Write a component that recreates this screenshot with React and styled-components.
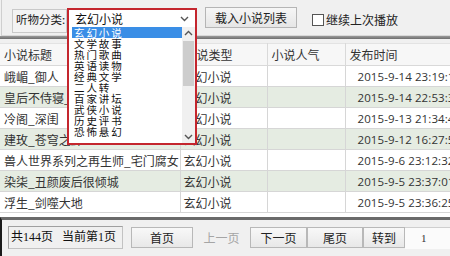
import React from "react";
import styled, { createGlobalStyle } from "styled-components";

const GlobalStyle = createGlobalStyle`
  html, body { margin: 0; padding: 0; background: #f0f0f0; }
  body { font-family: "Noto Sans CJK SC", "Microsoft YaHei", sans-serif; }
`;

const Window = styled.div`
  width: 450px;
  height: 256px;
  background: #f0f0f0;
  overflow: hidden;
  display: flex;
  flex-direction: column;
  position: relative;
  color: #222;
`;

const ToolGroup = styled.div`
  height: 36px;
  margin-left: 1px;
  border-left: 1px solid #cfcfcf;
  border-bottom: 1px solid #d8d8d8;
  display: flex;
  align-items: flex-start;
  padding: 7px 0 0 10px;
  box-sizing: border-box;
  position: relative;
  z-index: 2;
`;

const LabelBox = styled.div`
  width: 55px;
  height: 24px;
  margin-top: 2px;
  border: 1px solid #c9c9c9;
  background: #f3f3f3;
  box-sizing: border-box;
  font-size: 11.5px;
  line-height: 18px;
  padding-left: 3px;
  white-space: nowrap;
  overflow: hidden;
  color: #222;
`;

const Combo = styled.div`
  position: relative;
  width: 130px;
  height: 20px;
  margin-top: 1px;
`;

const Popup = styled.div`
  position: absolute;
  left: 0;
  top: 0;
  width: 130px;
  border: 2px solid #c4262e;
  box-sizing: border-box;
  background: #fff;
`;

const ComboField = styled.div`
  height: 17px;
  display: flex;
  align-items: center;
  justify-content: space-between;
  padding: 0 6px 0 6px;
  font-size: 12px;
  color: #111;
  background: #fff;
`;

const Chevron = styled.svg`
  width: 9px;
  height: 6px;
`;

const ListArea = styled.div`
  display: flex;
  height: 116px;
`;

const Items = styled.div`
  flex: 1;
  padding: 0 0 0 3px;
  display: flex;
  flex-direction: column;
`;

const Item = styled.div`
  height: 11px;
  line-height: 11px;
  font-size: 10.5px;
  letter-spacing: 1.9px;
  padding-left: 2px;
  color: ${(p) => (p.$active ? "#fff" : "#111")};
  background: ${(p) => (p.$active ? "#3a8ee6" : "transparent")};
  white-space: nowrap;
`;

const ScrollBar = styled.div`
  width: 13px;
  background: #f0f0f0;
  display: flex;
  flex-direction: column;
  align-items: center;
`;

const ScrollArrow = styled.div`
  height: 12px;
  display: flex;
  align-items: center;
  justify-content: center;
`;

const Thumb = styled.div`
  width: 11px;
  height: 45px;
  background: #cdcdcd;
  margin-top: 2px;
`;

const ScrollSpacer = styled.div`
  flex: 1;
`;

const LoadButton = styled.div`
  margin-left: 8px;
  width: 92px;
  height: 21px;
  border: 1px solid #b5b5b5;
  background: linear-gradient(#f6f6f6, #e6e6e6);
  box-sizing: border-box;
  font-size: 12px;
  line-height: 19px;
  text-align: center;
  color: #222;
`;

const CheckLabel = styled.label`
  margin-left: 15px;
  margin-top: 4px;
  display: flex;
  align-items: center;
  gap: 2px;
  font-size: 12px;
  color: #222;
`;

const CheckBox = styled.span`
  width: 12px;
  height: 12px;
  border: 1px solid #555;
  background: #fff;
  box-sizing: border-box;
`;

const DarkBand = styled.div`
  height: 3px;
  background: linear-gradient(#9a9a9a, #6e6e6e);
`;

const TableWrap = styled.div`
  margin-top: 4px;
  height: 174px;
  background: #fff;
  overflow: hidden;
`;

const Table = styled.table`
  border-collapse: collapse;
  table-layout: fixed;
  width: 500px;
  font-size: 12px;
`;

const HeadCell = styled.th`
  height: 21px;
  padding: 0 0 0 4px;
  text-align: left;
  font-weight: normal;
  color: #333;
  background: #f7f7f7;
  border-right: 1px solid #d9d9d9;
  border-bottom: 1px solid #d9d9d9;
  border-top: 1px solid #e3e3e3;
  white-space: nowrap;
  overflow: hidden;
`;

const Row = styled.tr`
  background: ${(p) => (p.$alt ? "#e5ece2" : "#fff")};
`;

const Cell = styled.td`
  height: 20px;
  padding: 0 0 0 ${(p) => p.$pad || 4}px;
  color: #333;
  border-right: 1px solid #d6d6d6;
  border-bottom: 1px solid #d6d6d6;
  white-space: nowrap;
  overflow: hidden;
`;

const DateCell = styled(Cell)`
  font-family: "Open Sans", "Noto Sans CJK SC", sans-serif;
  font-size: 11.5px;
  padding-left: 12px;
  letter-spacing: 0.1px;
`;

const BottomBar = styled.div`
  flex: 1;
  border-top: 3px solid #6a6a6a;
  border-left: 2px solid #1a1a1a;
  display: flex;
  align-items: flex-start;
  padding: 6px 0 0 6px;
  box-sizing: border-box;
`;

const PageInfo = styled.div`
  width: 115px;
  height: 23px;
  border: 1px solid #c2c2c2;
  border-top-color: #a0a0a0;
  border-left-color: #a0a0a0;
  box-sizing: border-box;
  background: #f0f0f0;
  font-family: "Liberation Serif", "Noto Sans CJK SC", serif;
  font-size: 12px;
  line-height: 21px;
  padding-left: 2px;
  white-space: nowrap;
  color: #111;
`;

const NavButton = styled.div`
  width: ${(p) => p.$w}px;
  height: 21px;
  margin-top: 1px;
  margin-left: ${(p) => p.$ml || 0}px;
  border: 1px solid ${(p) => (p.$disabled ? "transparent" : "#b8b8b8")};
  background: ${(p) => (p.$disabled ? "transparent" : "linear-gradient(#f8f8f8, #e8e8e8)")};
  box-sizing: border-box;
  font-size: 12px;
  line-height: 19px;
  text-align: center;
  color: ${(p) => (p.$disabled ? "#a5a5a5" : "#222")};
`;

const PageInput = styled.div`
  flex: 1;
  height: 21px;
  margin-top: 1px;
  background: #fbfbfb;
  border-top: 1px solid #cfcfcf;
  font-family: "Liberation Serif", serif;
  font-size: 11px;
  line-height: 20px;
  padding-left: 16px;
  color: #333;
`;

const categories = [
  "玄幻小说",
  "文学故事",
  "热门歌曲",
  "英语读物",
  "经典文学",
  "二人转",
  "百家讲坛",
  "武侠小说",
  "历史评书",
  "恐怖悬幻",
];

const rows = [
  ["峨嵋_御人", "玄幻小说", "2015-9-14 23:19:15"],
  ["皇后不侍寝_陛下", "玄幻小说", "2015-9-14 22:53:32"],
  ["冷阁_深闺", "玄幻小说", "2015-9-13 21:34:41"],
  ["建玫_苍穹之卦", "玄幻小说", "2015-9-12 16:27:53"],
  ["兽人世界系列之再生师_宅门腐女", "玄幻小说", "2015-9-6 23:12:32"],
  ["染柒_丑颜废后很倾城", "玄幻小说", "2015-9-5 23:37:01"],
  ["浮生_剑噬大地", "玄幻小说", "2015-9-5 23:36:25"],
];

const ArrowIcon = ({ up }) => (
  <Chevron viewBox="0 0 9 6">
    <path
      d={up ? "M1 5 L4.5 1.5 L8 5" : "M1 1 L4.5 4.5 L8 1"}
      fill="none"
      stroke="#555"
      strokeWidth="1.4"
    />
  </Chevron>
);

export default function App() {
  return (
    <Window>
      <GlobalStyle />
      <ToolGroup>
        <LabelBox>听物分类:</LabelBox>
        <Combo>
          <Popup>
            <ComboField>
              <span>玄幻小说</span>
              <ArrowIcon />
            </ComboField>
            <ListArea>
              <Items>
                {categories.map((c, i) => (
                  <Item key={c} $active={i === 0}>
                    {c}
                  </Item>
                ))}
              </Items>
              <ScrollBar>
                <ScrollArrow>
                  <ArrowIcon up />
                </ScrollArrow>
                <Thumb />
                <ScrollSpacer />
                <ScrollArrow>
                  <ArrowIcon />
                </ScrollArrow>
              </ScrollBar>
            </ListArea>
          </Popup>
        </Combo>
        <LoadButton>载入小说列表</LoadButton>
        <CheckLabel>
          <CheckBox />
          继续上次播放
        </CheckLabel>
      </ToolGroup>
      <DarkBand />
      <TableWrap>
        <Table>
          <colgroup>
            <col style={{ width: 180 }} />
            <col style={{ width: 87 }} />
            <col style={{ width: 78 }} />
            <col style={{ width: 155 }} />
          </colgroup>
          <thead>
            <tr>
              <HeadCell>小说标题</HeadCell>
              <HeadCell>小说类型</HeadCell>
              <HeadCell>小说人气</HeadCell>
              <HeadCell>发布时间</HeadCell>
            </tr>
          </thead>
          <tbody>
            {rows.map((r, i) => (
              <Row key={i} $alt={i % 2 === 1}>
                <Cell>{r[0]}</Cell>
                <Cell $pad={3}>{r[1]}</Cell>
                <Cell />
                <DateCell>{r[2]}</DateCell>
              </Row>
            ))}
          </tbody>
        </Table>
      </TableWrap>
      <BottomBar>
        <PageInfo>共144页&nbsp;&nbsp;&nbsp;当前第1页</PageInfo>
        <NavButton $w={62} $ml={8}>首页</NavButton>
        <NavButton $w={57} $disabled>上一页</NavButton>
        <NavButton $w={57}>下一页</NavButton>
        <NavButton $w={56}>尾页</NavButton>
        <NavButton $w={42}>转到</NavButton>
        <PageInput>1</PageInput>
      </BottomBar>
    </Window>
  );
}
